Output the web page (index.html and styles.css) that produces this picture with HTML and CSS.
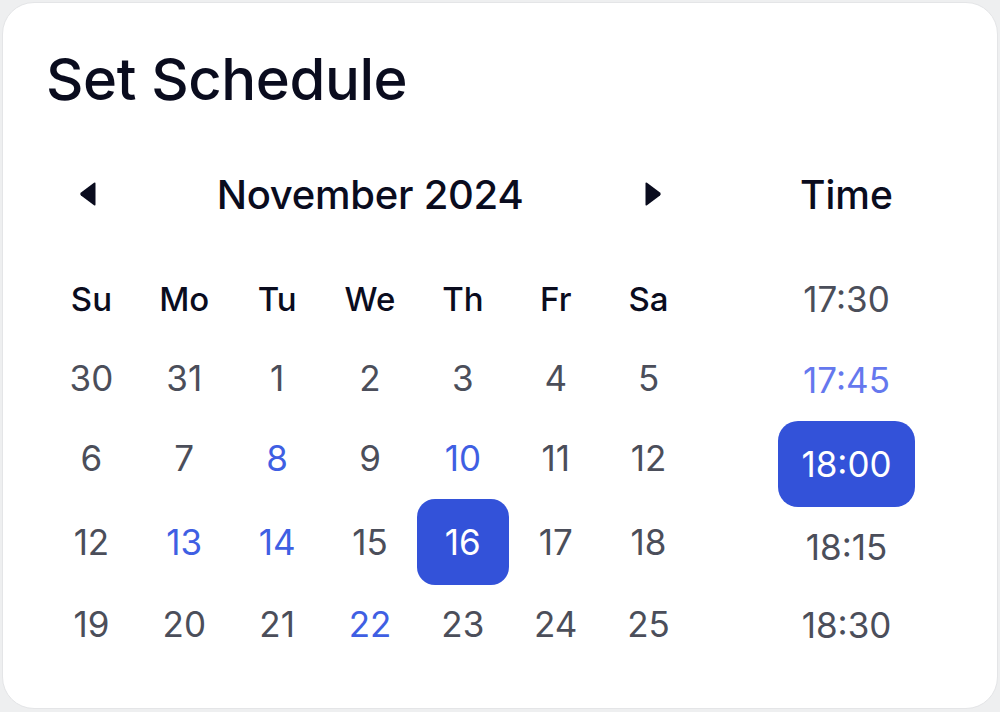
FILE: index.html
```html
<!DOCTYPE html>
<html lang="en">
<head>
<meta charset="utf-8">
<title>Set Schedule</title>
<link rel="stylesheet" href="styles.css">
</head>
<body>
<div class="card">
  <h1 class="title">Set Schedule</h1>
  <div class="content">
    <div class="calendar">
      <div class="cal-head">
        <button class="nav prev" aria-label="Previous month">
          <svg width="18" height="26" viewBox="0 0 18 26"><path d="M16.5 2.5 Q16.5 0.8 15 1.8 L2 11.6 Q0.3 13 2 14.4 L15 24.2 Q16.5 25.2 16.5 23.5 Z" fill="#0a0c1e"/></svg>
        </button>
        <div class="month">November 2024</div>
        <button class="nav next" aria-label="Next month">
          <svg width="18" height="26" viewBox="0 0 18 26"><path d="M1.5 2.5 Q1.5 0.8 3 1.8 L16 11.6 Q17.7 13 16 14.4 L3 24.2 Q1.5 25.2 1.5 23.5 Z" fill="#0a0c1e"/></svg>
        </button>
      </div>
      <div class="grid">
        <div class="wd">Su</div><div class="wd">Mo</div><div class="wd">Tu</div><div class="wd">We</div><div class="wd">Th</div><div class="wd">Fr</div><div class="wd">Sa</div>
        <div class="d">30</div><div class="d">31</div><div class="d">1</div><div class="d">2</div><div class="d">3</div><div class="d">4</div><div class="d">5</div>
        <div class="d">6</div><div class="d">7</div><div class="d hl">8</div><div class="d">9</div><div class="d hl">10</div><div class="d">11</div><div class="d">12</div>
        <div class="d">12</div><div class="d hl">13</div><div class="d hl">14</div><div class="d">15</div><div class="d"><span class="sel">16</span></div><div class="d">17</div><div class="d">18</div>
        <div class="d">19</div><div class="d">20</div><div class="d">21</div><div class="d hl">22</div><div class="d">23</div><div class="d">24</div><div class="d">25</div>
      </div>
    </div>
    <div class="time">
      <div class="time-head">Time</div>
      <div class="slots">
        <div class="slot">17:30</div>
        <div class="slot soft">17:45</div>
        <div class="slot"><span class="tsel">18:00</span></div>
        <div class="slot">18:15</div>
        <div class="slot">18:30</div>
      </div>
    </div>
  </div>
</div>
</body>
</html>
```

FILE: styles.css
```css
* { box-sizing: border-box; }

html, body {
  margin: 0;
  padding: 0;
  background: #eeeff0;
}

body {
  font-family: Inter, "Noto Sans", sans-serif;
  width: 1000px;
  height: 712px;
  padding: 2px 2px 3px 2px;
}

.card {
  height: 100%;
  background: #ffffff;
  border: 1.5px solid #e4e5e7;
  border-radius: 32px;
  padding: 0 0 0 42px;
}

.title {
  margin: 0;
  padding-top: 42px;
  padding-left: 1px;
  height: 140px;
  font-size: 58px;
  font-weight: 500;
  line-height: 68px;
  color: #0a0c1e;
  letter-spacing: -0.4px;
}

.content {
  display: flex;
}

.calendar {
  width: 650px;
}

.cal-head {
  display: grid;
  grid-template-columns: 92.86px 1fr 92.86px;
  align-items: center;
  height: 102px;
  margin-bottom: 14px;
}

.nav {
  border: 0;
  background: none;
  padding: 0;
  display: flex;
  justify-content: center;
  align-items: center;
  cursor: pointer;
}

.nav.prev { padding-right: 7px; }
.nav.next { padding-left: 9px; }

.month {
  text-align: center;
  font-size: 40px;
  font-weight: 500;
  color: #0a0c1e;
  letter-spacing: -0.25px;
}

.grid {
  display: grid;
  grid-template-columns: repeat(7, 1fr);
  grid-template-rows: 80px 78px 82px 86px 78px;
  align-items: center;
  justify-items: center;
}

.wd {
  font-size: 33px;
  font-weight: 500;
  color: #0a0c1e;
}

.d {
  font-size: 35px;
  color: #4b4e5a;
  width: 100%;
  height: 100%;
  display: flex;
  align-items: center;
  justify-content: center;
}

.d.hl { color: #3f5fe3; }

.sel {
  display: flex;
  align-items: center;
  justify-content: center;
  width: 92px;
  height: 86px;
  border-radius: 18px;
  background: #3352d9;
  color: #ffffff;
}

.time {
  flex: 1;
  display: flex;
  flex-direction: column;
  align-items: center;
  padding-left: 1px;
}

.time-head {
  height: 102px;
  margin-bottom: 14px;
  display: flex;
  align-items: center;
  font-size: 39px;
  font-weight: 500;
  color: #0a0c1e;
}

.slots {
  display: grid;
  grid-template-rows: 80px 82px 86px 80px 76px;
  justify-items: center;
  align-items: center;
  width: 100%;
}

.slot {
  font-size: 35px;
  color: #4b4e5a;
}

.slot.soft { color: #6578ee; }

.tsel {
  display: flex;
  align-items: center;
  justify-content: center;
  width: 137px;
  height: 86px;
  border-radius: 20px;
  background: #3352d9;
  color: #ffffff;
}
```
